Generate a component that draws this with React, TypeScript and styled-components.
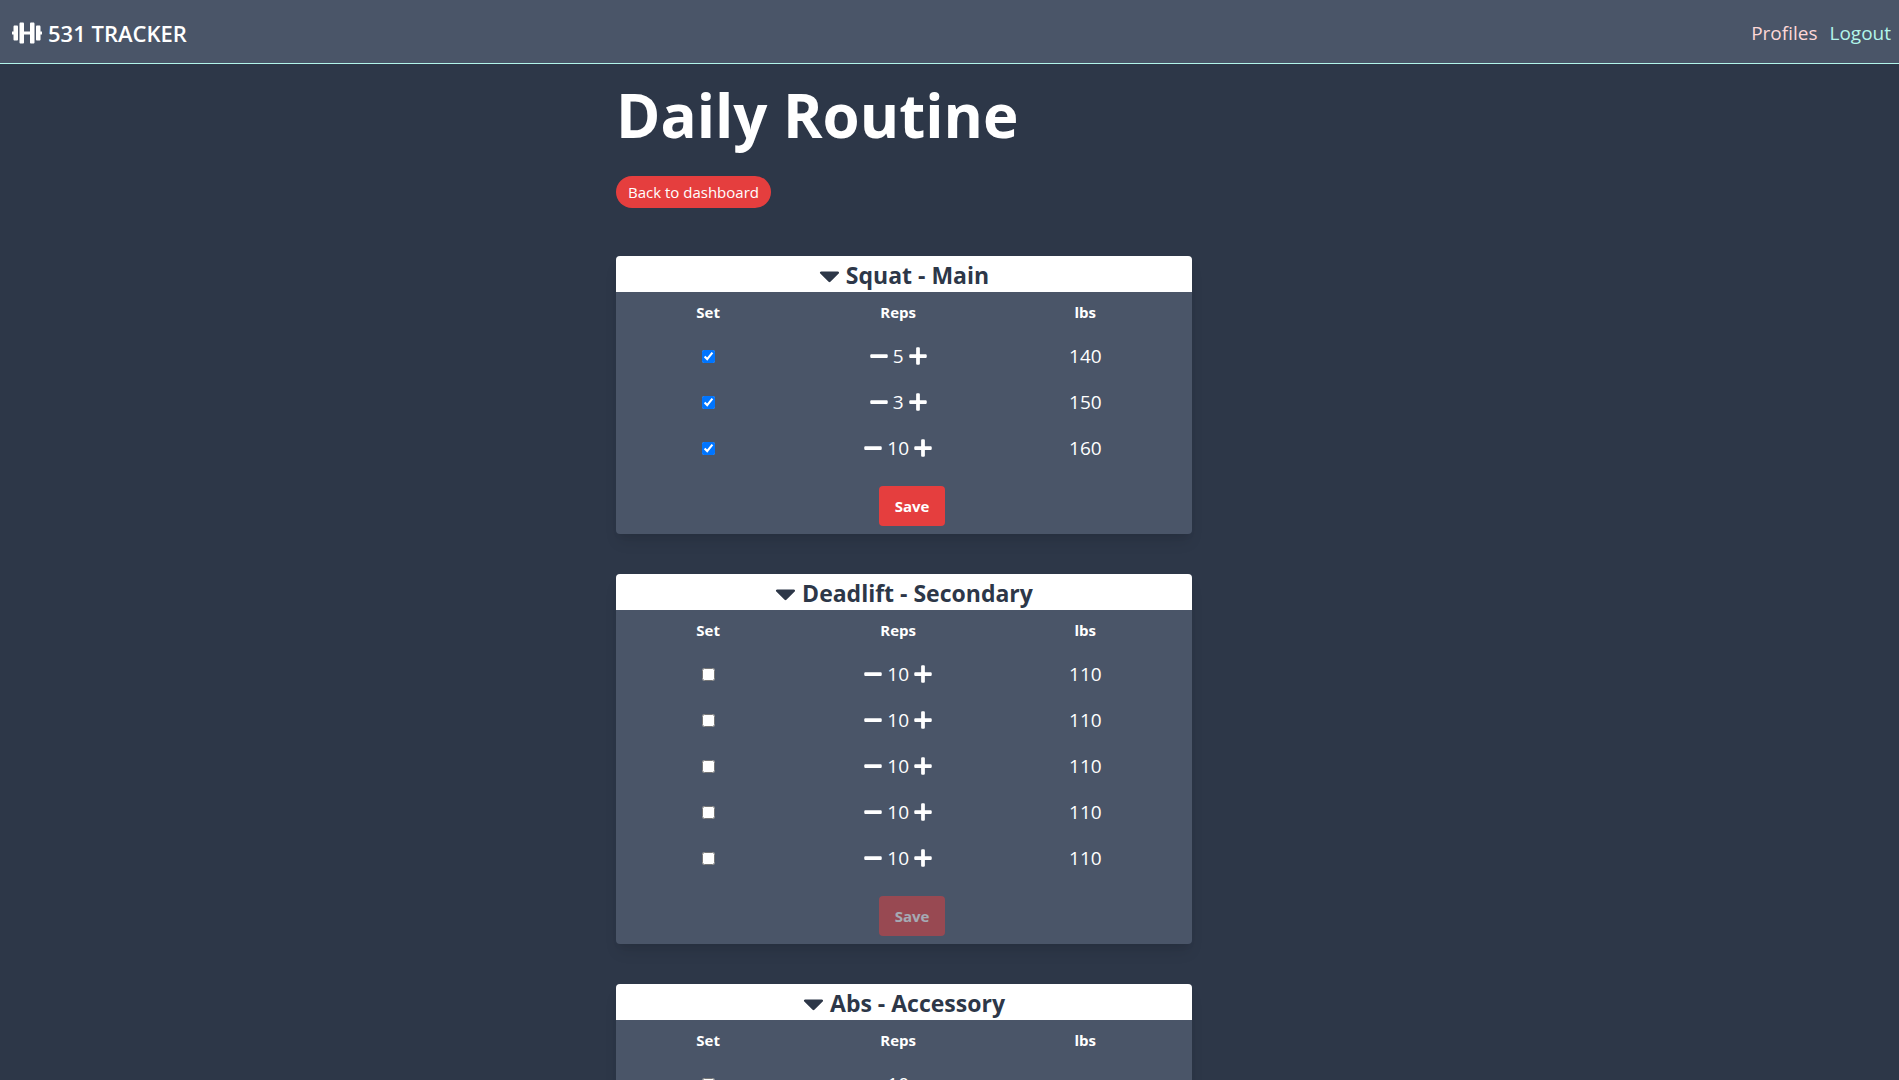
import React, { useId, useState } from "react";
import styled, { createGlobalStyle } from "styled-components";
import { FaCaretDown, FaDumbbell, FaMinus, FaPlus } from "react-icons/fa";

const GlobalStyle = createGlobalStyle`
  *, *::before, *::after { box-sizing: border-box; }
  body {
    margin: 0;
    background: #2d3748;
    color: #fff;
    font-family: "Segoe UI", "Open Sans", "Noto Sans", sans-serif;
    font-size: 15px;
    line-height: 24px;
  }
  button, input { font: inherit; color: inherit; }
  svg { display: block; }
`;

const Header = styled.header`
  display: flex;
  align-items: center;
  justify-content: space-between;
  height: 64px;
  padding: 2px 8px 0 12px;
  background: #4a5568;
  border-bottom: 1px solid #b2f5ea;
`;

const Brand = styled.a`
  display: flex;
  align-items: center;
  gap: 6px;
  color: #fff;
  font-size: 22px;
  font-weight: 600;
  line-height: 36px;
  text-decoration: none;
`;

const Nav = styled.nav`
  display: flex;
  gap: 12px;
`;

const NavLink = styled.a<{ $tone: string }>`
  color: ${(p) => p.$tone};
  font-size: 19px;
  line-height: 30px;
  text-decoration: none;
`;

const Main = styled.main`
  max-width: 667px;
  margin: 0 auto;
`;

const Title = styled.h1`
  margin: 0;
  padding: 3px 0 13px;
  font-size: 60px;
  font-weight: 700;
  line-height: 96px;
`;

const BackLink = styled.a`
  display: block;
  width: fit-content;
  padding: 4px 12px;
  border-radius: 16px;
  background: #e53e3e;
  color: #fff;
  text-decoration: none;
`;

const CardList = styled.div`
  display: flex;
  flex-direction: column;
  gap: 40px;
  max-width: 576px;
  padding: 48px 0 40px;
`;

const Card = styled.section`
  overflow: hidden;
  border-radius: 4px;
  background: #4a5568;
  box-shadow: 0 10px 15px -3px rgba(0, 0, 0, 0.1), 0 4px 6px -2px rgba(0, 0, 0, 0.05);
`;

const CardTitle = styled.h2`
  margin: 0;
  background: #fff;
  color: #2d3748;
  font-size: 23px;
  font-weight: 700;
  line-height: 34px;
`;

const Toggle = styled.button`
  display: flex;
  align-items: center;
  justify-content: center;
  width: 100%;
  padding: 2px 6px 0 0;
  border: 0;
  background: none;
  cursor: pointer;
`;

const Sets = styled.table`
  width: 97%;
  border-collapse: collapse;
  table-layout: fixed;
  text-align: center;
`;

const HeadCell = styled.th<{ $width: string }>`
  width: ${(p) => p.$width};
  padding: 8px 0 9px;
  font-weight: 700;
`;

const Cell = styled.td`
  padding: 8px 0;
  font-size: 19px;
  line-height: 30px;
`;

const Check = styled.input`
  width: 13px;
  height: 13px;
  margin: 0;
`;

const Stepper = styled.div`
  display: flex;
  align-items: center;
  justify-content: center;
  gap: 4px;
`;

const Step = styled.button`
  padding: 0;
  border: 0;
  background: none;
  cursor: pointer;
`;

const CardFooter = styled.div`
  display: flex;
  justify-content: center;
  padding: 15px 0 8px 16px;
`;

const Save = styled.button`
  padding: 8px 16px;
  border: 0;
  border-radius: 4px;
  background: #e53e3e;
  font-weight: 700;
  &:disabled { opacity: 0.5; }
`;

type SetData = { reps: number; lbs?: number; done: boolean };
type Exercise = { name: string; sets: SetData[] };

const repeat = (count: number, set: SetData): SetData[] => Array.from({ length: count }, () => ({ ...set }));

const routine: Exercise[] = [
  {
    name: "Squat - Main",
    sets: [
      { reps: 5, lbs: 140, done: true },
      { reps: 3, lbs: 150, done: true },
      { reps: 10, lbs: 160, done: true },
    ],
  },
  { name: "Deadlift - Secondary", sets: repeat(5, { reps: 10, lbs: 110, done: false }) },
  { name: "Abs - Accessory", sets: repeat(1, { reps: 10, done: false }) },
];

function ExerciseCard({ exercise }: { exercise: Exercise }) {
  const [sets, setSets] = useState(exercise.sets);
  const [open, setOpen] = useState(true);
  const id = useId();
  const update = (index: number, change: Partial<SetData>) =>
    setSets(sets.map((s, i) => (i === index ? { ...s, ...change } : s)));

  return (
    <Card>
      <CardTitle>
        <Toggle aria-expanded={open} onClick={() => setOpen(!open)}>
          <FaCaretDown size={33} />
          {exercise.name}
        </Toggle>
      </CardTitle>
      {open && (
        <>
          <Sets>
            <thead>
              <tr>
                <HeadCell $width="33%" id={id}>Set</HeadCell>
                <HeadCell $width="35%">Reps</HeadCell>
                <HeadCell $width="32%">lbs</HeadCell>
              </tr>
            </thead>
            <tbody>
              {sets.map((set, i) => (
                <tr key={i}>
                  <Cell>
                    <Check
                      type="checkbox"
                      aria-labelledby={id}
                      checked={set.done}
                      onChange={() => update(i, { done: !set.done })}
                    />
                  </Cell>
                  <Cell>
                    {set.lbs === undefined ? (
                      set.reps
                    ) : (
                      <Stepper>
                        <Step aria-label="Fewer reps" onClick={() => update(i, { reps: Math.max(0, set.reps - 1) })}>
                          <FaMinus size={20} />
                        </Step>
                        {set.reps}
                        <Step aria-label="More reps" onClick={() => update(i, { reps: set.reps + 1 })}>
                          <FaPlus size={20} />
                        </Step>
                      </Stepper>
                    )}
                  </Cell>
                  <Cell>{set.lbs}</Cell>
                </tr>
              ))}
            </tbody>
          </Sets>
          <CardFooter>
            <Save disabled={!sets.every((s) => s.done)}>Save</Save>
          </CardFooter>
        </>
      )}
    </Card>
  );
}

export default function App() {
  return (
    <>
      <GlobalStyle />
      <Header>
        <Brand href="#">
          <FaDumbbell size={30} />
          531 TRACKER
        </Brand>
        <Nav>
          <NavLink href="#profiles" $tone="#fed7d7">Profiles</NavLink>
          <NavLink href="#logout" $tone="#b2f5ea">Logout</NavLink>
        </Nav>
      </Header>
      <Main>
        <Title>Daily Routine</Title>
        <BackLink href="#dashboard">Back to dashboard</BackLink>
        <CardList>
          {routine.map((exercise) => (
            <ExerciseCard key={exercise.name} exercise={exercise} />
          ))}
        </CardList>
      </Main>
    </>
  );
}
